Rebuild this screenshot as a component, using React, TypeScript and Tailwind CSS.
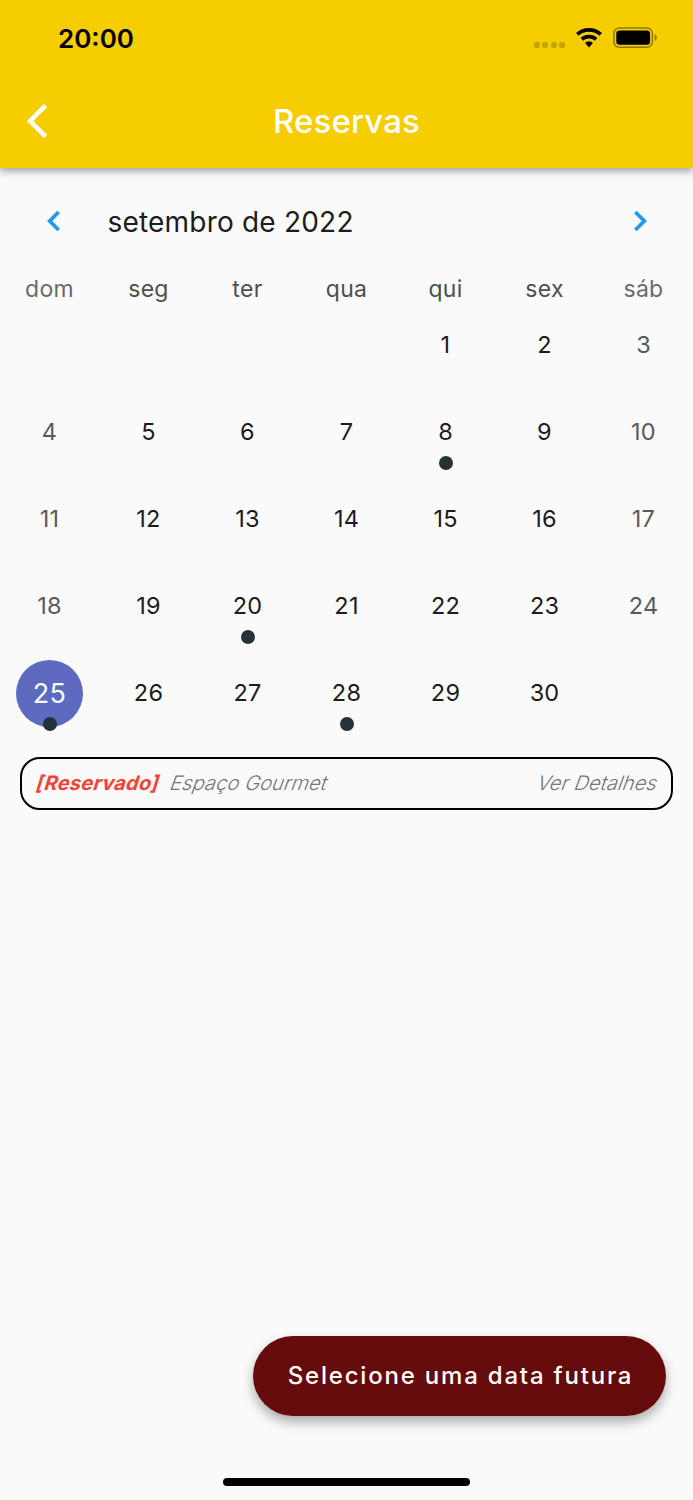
const weekDays = ["dom", "seg", "ter", "qua", "qui", "sex", "sáb"];

// Setembro de 2022 começa numa quinta-feira
const emptyDays = 4;
const totalDays = 30;
const selectedDay = 25;
const eventDays = [8, 20, 25, 28];

function StatusBar() {
  return (
    <div className="flex h-[78px] items-center justify-between pl-[58px] pr-[35px]">
      <span className="text-[26px] font-semibold leading-none text-black">20:00</span>
      <div className="mb-[2px] flex items-center">
        <div className="mt-[14px] flex gap-[2.4px]">
          <span className="size-[6px] rounded-[2px] bg-black/20"></span>
          <span className="size-[6px] rounded-[2px] bg-black/20"></span>
          <span className="size-[6px] rounded-[2px] bg-black/20"></span>
          <span className="size-[6px] rounded-[2px] bg-black/20"></span>
        </div>
        <svg className="ml-[10px]" width="28" height="20" viewBox="0 0 28 20">
          <path d="M14 0C19 0 23.6 1.9 27 5.1L24.4 7.8C21.6 5.2 18 3.8 14 3.8S6.4 5.2 3.6 7.8L1 5.1C4.4 1.9 9 0 14 0Z" />
          <path d="M14 6.8C17.2 6.8 20.1 8 22.4 10L19.7 12.7C18.1 11.4 16.2 10.6 14 10.6S9.9 11.4 8.3 12.7L5.6 10C7.9 8 10.8 6.8 14 6.8Z" />
          <path d="M14 13.6C15.5 13.6 16.9 14.1 17.9 15L14 19.6L10.1 15C11.1 14.1 12.5 13.6 14 13.6Z" />
        </svg>
        <svg className="ml-[10px]" width="45" height="22" viewBox="0 0 45 22">
          <rect x="0.9" y="0.9" width="38.5" height="19.4" rx="5.5" fill="none" stroke="#000" strokeOpacity="0.42" strokeWidth="1.5" />
          <rect x="3.3" y="3.4" width="33.8" height="14.3" rx="3.2" />
          <path d="M41.8 7.3C43 7.9 43.8 9.1 43.8 10.6S43 13.3 41.8 13.9Z" fillOpacity="0.45" />
        </svg>
      </div>
    </div>
  );
}

function Header() {
  return (
    <header className="relative z-10 h-[168px] bg-[#f6cd00] shadow-[0_3px_8px_rgba(0,0,0,0.38)]">
      <StatusBar />
      <div className="grid h-[86px] grid-cols-[80px_1fr_80px] items-center">
        <button className="pl-[27px]" aria-label="Voltar">
          <svg width="20" height="34" viewBox="0 2 11.67 20" fill="#fff" stroke="#fff" strokeWidth="0.3">
            <path d="M11.67 3.87L9.9 2.1 0 12l9.9 9.9 1.77-1.77L3.54 12z" />
          </svg>
        </button>
        <h1 className="text-center text-[33px] font-medium leading-none tracking-[0.1px] text-white">Reservas</h1>
      </div>
    </header>
  );
}

function Day({ day, weekend }: { day: number; weekend: boolean }) {
  const selected = day === selectedDay;

  return (
    <div className="relative flex h-[87px] items-center justify-center">
      {selected ? (
        <span className="mt-px flex size-[67px] items-center justify-center rounded-full bg-[#5c6bc0] pt-[2px] text-[27px] text-[#fafafa]">
          {day}
        </span>
      ) : (
        <span className={weekend ? "text-[23.5px] text-[#5a5a5a]" : "text-[23.5px] text-[#1c1c1c]"}>{day}</span>
      )}
      {eventDays.includes(day) && (
        <span className="absolute bottom-[5px] left-[43px] size-[14px] rounded-full bg-[#263238]"></span>
      )}
    </div>
  );
}

function Calendar() {
  const days = Array.from({ length: totalDays }, (_, i) => i + 1);

  return (
    <section>
      <div className="flex h-[106px] items-center pl-[34px] pr-[33px]">
        <button aria-label="Mês anterior">
          <svg width="40" height="40" viewBox="0 0 24 24" fill="#2196f3" stroke="#2196f3" strokeWidth="0.3">
            <path d="M15.41 7.41L14 6l-6 6 6 6 1.41-1.41L10.83 12z" />
          </svg>
        </button>
        <h2 className="ml-[33.5px] flex-1 pt-px text-[28px] leading-none tracking-[0.2px] text-[#1c1c1c]">setembro de 2022</h2>
        <button aria-label="Próximo mês">
          <svg width="40" height="40" viewBox="0 0 24 24" fill="#2196f3" stroke="#2196f3" strokeWidth="0.3">
            <path d="M10 6L8.59 7.41 13.17 12l-4.58 4.59L10 18l6-6z" />
          </svg>
        </button>
      </div>

      {/* Dias da semana */}
      <div className="grid h-[27px] grid-cols-7 pt-px">
        {weekDays.map((name, index) => (
          <span
            key={name}
            className={
              index % 6 === 0
                ? "text-center text-[23px] leading-[29px] tracking-[0.3px] text-[#6a6a6a]"
                : "text-center text-[23px] leading-[29px] tracking-[0.3px] text-[#4f4f4f]"
            }
          >
            {name}
          </span>
        ))}
      </div>

      {/* Dias do mês */}
      <div className="grid grid-cols-7 tracking-[0.2px]">
        {Array.from({ length: emptyDays }, (_, i) => (
          <div key={`vazio-${i}`}></div>
        ))}
        {days.map((day) => (
          <Day key={day} day={day} weekend={(day + emptyDays - 1) % 7 % 6 === 0} />
        ))}
      </div>
    </section>
  );
}

export default function App() {
  return (
    <main className="flex h-[1500px] w-[693px] flex-col overflow-hidden bg-[#fafafa] font-['Inter',sans-serif]">
      <Header />
      <Calendar />

      {/* Reserva do dia selecionado */}
      <div className="mx-[20px] mt-[21px] flex h-[53px] items-center rounded-[20px] border-2 border-black pb-px pl-[15px] pr-[13px] text-[20px] text-[#757575]">
        <span className="-skew-x-[17deg] font-bold tracking-[0.25px] text-[#f44336]">[Reservado]</span>
        <span className="ml-[11px] -skew-x-[20deg] font-[350] tracking-[0.12px]">Espaço Gourmet</span>
        <span className="ml-auto -skew-x-[20deg] font-[350] tracking-[0.12px]">Ver Detalhes</span>
      </div>

      <button className="mb-[62px] ml-auto mr-[27px] mt-auto h-[80px] w-[413px] rounded-full bg-[#660b0b] pl-[2px] text-[24px] font-medium tracking-[1.8px] text-white shadow-[0_6px_12px_rgba(0,0,0,0.32)]">
        Selecione uma data futura
      </button>
      <div className="mx-auto mb-[14px] h-[8px] w-[247px] shrink-0 rounded-full bg-black"></div>
    </main>
  );
}
